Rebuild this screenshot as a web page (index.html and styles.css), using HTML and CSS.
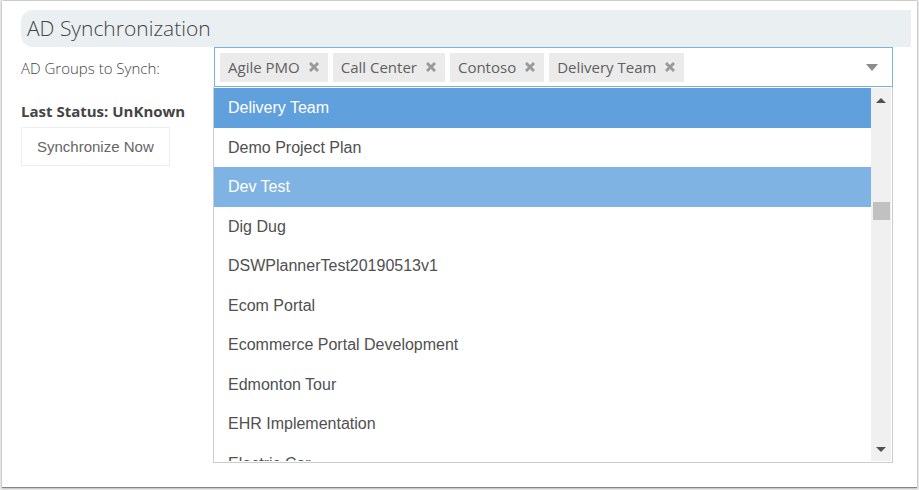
FILE: index.html
```html
<!DOCTYPE html>
<html lang="en">
<head>
<meta charset="utf-8">
<title>AD Synchronization</title>
<link rel="stylesheet" href="styles.css">
</head>
<body>
<svg class="defs" aria-hidden="true">
  <symbol id="cross" viewBox="0 0 12 12"><path d="M1 3 3 1 6 4 9 1 11 3 8 6 11 9 9 11 6 8 3 11 1 9 4 6Z"/></symbol>
</svg>
<main class="card">
  <h1 class="title">AD Synchronization</h1>
  <div class="form">
    <section class="side">
      <label class="label" for="groups">AD Groups to Synch:</label>
      <strong class="status">Last Status: UnKnown</strong>
      <button class="sync" type="button">Synchronize Now</button>
    </section>
    <section class="picker">
      <div class="box">
        <ul class="tags">
          <li class="tag">Agile PMO<button class="remove" type="button" aria-label="Remove Agile PMO"><svg><use href="#cross"/></svg></button></li>
          <li class="tag">Call Center<button class="remove" type="button" aria-label="Remove Call Center"><svg><use href="#cross"/></svg></button></li>
          <li class="tag">Contoso<button class="remove" type="button" aria-label="Remove Contoso"><svg><use href="#cross"/></svg></button></li>
          <li class="tag">Delivery Team<button class="remove" type="button" aria-label="Remove Delivery Team"><svg><use href="#cross"/></svg></button></li>
        </ul>
        <input class="search" id="groups" type="text" role="combobox" aria-expanded="true" aria-controls="options">
        <button class="toggle" type="button" aria-label="Toggle list"><svg viewBox="0 0 12 7"><path d="M0 0H12L6 7Z"/></svg></button>
      </div>
      <div class="dropdown">
        <ul class="options" id="options" role="listbox" aria-label="AD groups">
          <li class="option selected" role="option" aria-selected="true">Delivery Team</li>
          <li class="option" role="option">Demo Project Plan</li>
          <li class="option hovered" role="option">Dev Test</li>
          <li class="option" role="option">Dig Dug</li>
          <li class="option" role="option">DSWPlannerTest20190513v1</li>
          <li class="option" role="option">Ecom Portal</li>
          <li class="option" role="option">Ecommerce Portal Development</li>
          <li class="option" role="option">Edmonton Tour</li>
          <li class="option" role="option">EHR Implementation</li>
          <li class="option" role="option">Electric Car</li>
        </ul>
        <div class="scrollbar">
          <button class="arrow" type="button" aria-label="Scroll up"><svg viewBox="0 0 10 5"><path d="M0 5H10L5 0Z"/></svg></button>
          <div class="track"><div class="thumb"></div></div>
          <button class="arrow" type="button" aria-label="Scroll down"><svg viewBox="0 0 10 5"><path d="M0 0H10L5 5Z"/></svg></button>
        </div>
      </div>
    </section>
  </div>
</main>
</body>
</html>
```
FILE: styles.css
```css
* { box-sizing: border-box; }
body {
  margin: 0;
  padding: 1px 2px 2px;
  background: #ececec;
  color: #444;
  font: 15px/20px "Open Sans", sans-serif;
}
ul { list-style: none; margin: 0; padding: 0; }
button { margin: 0; padding: 0; border: 0; background: none; color: inherit; font: inherit; }
svg { display: block; }
.defs { display: none; }
.card {
  padding: 9px 6px 24px 19px;
  background: #fff;
  border-bottom: 1px solid #858585;
  box-shadow: 0 0 2px #888;
}
.title {
  margin: 0;
  padding: 0 6px;
  background: #eaeff2;
  border-radius: 12px 0 0 12px;
  font-size: 21px;
  font-weight: 300;
  line-height: 37px;
}
.form {
  display: grid;
  grid-template-columns: 192px minmax(0, 1fr);
  padding-right: 18px;
}
.side { display: flex; flex-direction: column; align-items: flex-start; }
.label { margin-top: 11px; font-weight: 300; }
.status { margin-top: 23px; }
.sync {
  margin-top: 6px;
  padding: 0 15px;
  border: 1px solid #eee;
  background: #fff;
  color: #666;
  font: 15px/37px "Liberation Sans", sans-serif;
}
.box {
  display: flex;
  align-items: center;
  height: 40px;
  margin-left: 1px;
  padding: 0 14px 0 5px;
  border: 1px solid #7bb1e0;
}
.tags { display: flex; gap: 5px; }
.tag {
  display: flex;
  align-items: center;
  gap: 8px;
  padding: 0 8px;
  background: #ebebeb;
  color: #606060;
  line-height: 29px;
  white-space: nowrap;
}
.remove { fill: #999; }
.remove svg { width: 12px; height: 12px; }
.search { flex: 1; min-width: 0; border: 0; outline: 0; background: none; font: inherit; }
.toggle { fill: #8c8c8c; }
.toggle svg { width: 12px; height: 7px; }
.dropdown {
  display: flex;
  height: 376px;
  padding: 1px 1px 1px 0;
  border: 1px solid #ccc;
  border-top: 0;
}
.options {
  display: grid;
  grid-auto-rows: 40px 39px;
  flex: 1;
  overflow: hidden;
  color: #505050;
  font: 16px/39px "Liberation Sans", sans-serif;
}
.option { padding-left: 14px; }
.selected { background: #5fa0dd; color: #fff; }
.hovered { background: #7fb3e4; color: #fff; }
.scrollbar {
  display: flex;
  flex-direction: column;
  width: 20px;
  background: #f0f0f0;
}
.arrow { display: grid; place-items: center; height: 24px; fill: #505050; }
.arrow svg { width: 10px; height: 5px; }
.track { flex: 1; padding: 90px 1px 0 2px; }
.thumb { height: 18px; background: #c1c1c1; }
```
